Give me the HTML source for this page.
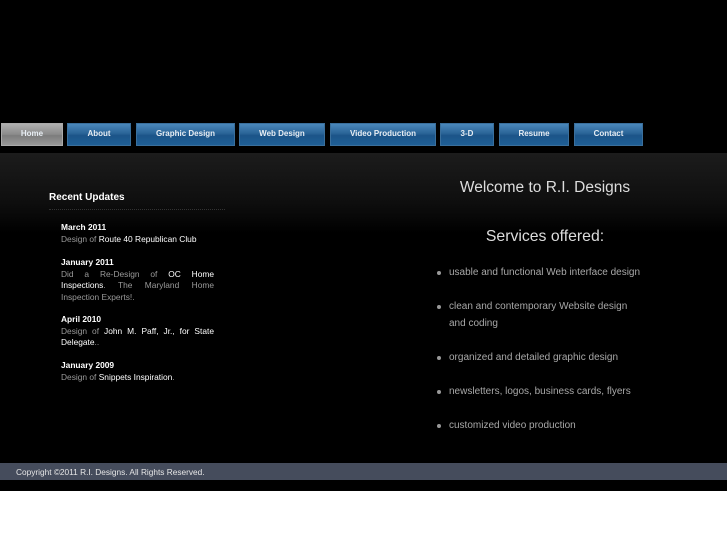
<!DOCTYPE html>
<html><head><style>
*{margin:0;padding:0;box-sizing:border-box}
body{width:727px;height:545px;background:#fff;font-family:"Liberation Sans",sans-serif;position:relative;overflow:hidden}
#top{position:absolute;left:0;top:0;width:727px;height:153px;background:#000}
#main{position:absolute;left:0;top:153px;width:727px;height:310px;background:linear-gradient(#1c1c1c 0,#0e0e0e 50px,#000 80px,#000)}
#foot{position:absolute;left:0;top:463px;width:727px;height:17px;background:#454c5c;color:#e6e6e6;font-size:8.3px;line-height:19px;padding-left:16px}
#bb{position:absolute;left:0;top:480px;width:727px;height:11px;background:#000}
.b{position:absolute;top:123px;height:23px;border:1px solid #3a6f9c;background:linear-gradient(#4a87bb 0,#2a6497 45%,#1b5488 55%,#1f5f96 100%);color:#e8eef4;font-size:8px;font-weight:bold;text-align:center;line-height:19px}
.h{background:linear-gradient(#b0b0b0,#8a8a8a 50%,#7c7c7c 55%,#999);border-color:#aaa}
h3{position:absolute;left:49px;top:192px;color:#fff;font-size:10px}
.ln{position:absolute;left:49px;top:209px;width:176px;border-top:1px dotted #333}
.up{position:absolute;left:61px;width:153px;font-size:8.4px;line-height:11.5px;color:#9a9a9a;text-align:justify}
.up b{color:#fff;font-weight:normal}
.up strong{color:#fff;display:block}
.r{position:absolute;color:#ddd;text-align:center;width:240px;left:425px}
ul{position:absolute;left:437px;top:264px;list-style:none;color:#a8a8a8;font-size:10px}
li{position:relative;padding-left:12px;line-height:17px;margin-bottom:17px;width:205px}
li:before{content:"";position:absolute;left:0;top:7px;width:4px;height:4px;border-radius:2px;background:#999}
</style></head><body>
<div id="top"></div>
<div id="main"></div>
<div class="b h" style="left:1px;width:62px">Home</div>
<div class="b" style="left:67px;width:64px">About</div>
<div class="b" style="left:136px;width:99px">Graphic Design</div>
<div class="b" style="left:239px;width:86px">Web Design</div>
<div class="b" style="left:330px;width:106px">Video Production</div>
<div class="b" style="left:440px;width:54px">3-D</div>
<div class="b" style="left:499px;width:70px">Resume</div>
<div class="b" style="left:574px;width:69px">Contact</div>
<h3>Recent Updates</h3><div class="ln"></div>
<div class="up" style="top:222px"><strong>March 2011</strong>Design of <b>Route 40 Republican Club</b></div>
<div class="up" style="top:257px"><strong>January 2011</strong>Did a Re-Design of <b>OC Home Inspections</b>. The Maryland Home Inspection Experts!.</div>
<div class="up" style="top:314px"><strong>April 2010</strong>Design of <b>John M. Paff, Jr., for State Delegate</b>..</div>
<div class="up" style="top:360px"><strong>January 2009</strong>Design of <b>Snippets Inspiration</b>.</div>
<div class="r" style="top:179px;font-size:15.5px">Welcome to R.I. Designs</div>
<div class="r" style="top:228px;font-size:15.8px">Services offered:</div>
<ul>
<li>usable and functional Web interface design</li>
<li>clean and contemporary Website design and coding</li>
<li>organized and detailed graphic design</li>
<li>newsletters, logos, business cards, flyers</li>
<li>customized video production</li>
</ul>
<div id="foot">Copyright ©2011 R.I. Designs. All Rights Reserved.</div>
<div id="bb"></div>
</body></html>
